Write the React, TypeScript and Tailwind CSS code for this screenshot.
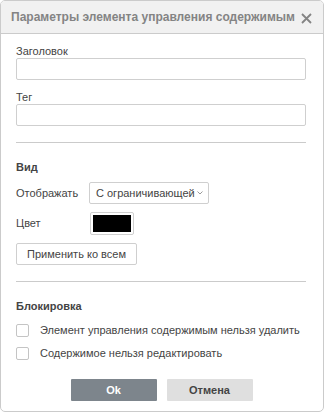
import React from "react";

export default function App() {
  const font = { fontFamily: '"Liberation Sans", Arial, sans-serif' };
  return (
    <div style={font} className="w-[324px] h-[412px] bg-white">
      <div className="w-[324px] h-[412px] border border-[#cbcbcb] rounded-[5px] overflow-hidden flex flex-col bg-white text-[11px] leading-[14px] text-[#444444]">
        <div className="h-[33px] shrink-0 bg-[#f1f1f1] border-b border-[#cbcbcb] flex items-center justify-between pl-[10px] pr-[11px]">
          <span className="text-[12px] font-bold text-[#848484] whitespace-nowrap">
            Параметры элемента управления содержимым
          </span>
          <svg width="11" height="11" viewBox="0 0 11 11" className="mt-[2px]">
            <path d="M1 1 L10 10 M10 1 L1 10" stroke="#848484" strokeWidth="1.8" fill="none" />
          </svg>
        </div>
        <div className="flex flex-col px-[15px] pt-[10px]">
          <div className="h-[14px]">Заголовок</div>
          <div className="h-[22px] border border-[#cfcfcf] rounded-[2px] w-[290px]" />
          <div className="h-[14px] mt-[10px]">Тег</div>
          <div className="h-[22px] border border-[#cfcfcf] rounded-[2px] w-[290px]" />
          <div className="mt-[16px] h-px bg-[#cbcbcb] w-[290px]" />
          <div className="mt-[17px] h-[14px] font-bold">Вид</div>
          <div className="mt-[8px] flex items-center h-[22px]">
            <span className="w-[73px]">Отображать</span>
            <div className="h-[22px] w-[120px] border border-[#cfcfcf] rounded-[2px] flex items-center justify-between pl-[6px] pr-[5px]">
              <span className="whitespace-nowrap">С ограничивающей</span>
              <svg width="6" height="4" viewBox="0 0 6 4">
                <path d="M0.5 0.5 L3 3 L5.5 0.5" stroke="#9a9a9a" strokeWidth="1" fill="none" />
              </svg>
            </div>
          </div>
          <div className="mt-[8px] flex items-center h-[22px]">
            <span className="w-[74px]">Цвет</span>
            <div className="h-[23px] w-[44px] border border-[#cfcfcf] rounded-[2px] p-[2px] bg-white">
              <div className="w-full h-full bg-black" />
            </div>
          </div>
          <div className="mt-[9px] h-[22px] w-[121px] border border-[#cfcfcf] rounded-[2px] flex items-center justify-center whitespace-nowrap">
            Применить ко всем
          </div>
          <div className="mt-[16px] h-px bg-[#cbcbcb] w-[290px]" />
          <div className="mt-[17px] h-[14px] font-bold">Блокировка</div>
          <div className="mt-[10px] flex items-center h-[14px]">
            <div className="w-[13px] h-[13px] border border-[#c4c4c4] rounded-[2px] bg-white" />
            <span className="ml-[11px] whitespace-nowrap">Элемент управления содержимым нельзя удалить</span>
          </div>
          <div className="mt-[9px] flex items-center h-[14px]">
            <div className="w-[13px] h-[13px] border border-[#c4c4c4] rounded-[2px] bg-white" />
            <span className="ml-[11px] whitespace-nowrap">Содержимое нельзя редактировать</span>
          </div>
          <div className="mt-[19px] flex justify-center gap-[10px] pr-[1px]">
            <div className="w-[86px] h-[22px] bg-[#7d858c] rounded-[1px] flex items-center justify-center text-white font-bold">
              Ok
            </div>
            <div className="w-[86px] h-[22px] bg-[#dfdfdf] rounded-[1px] flex items-center justify-center text-[#444444] font-bold">
              Отмена
            </div>
          </div>
        </div>
      </div>
    </div>
  );
}
